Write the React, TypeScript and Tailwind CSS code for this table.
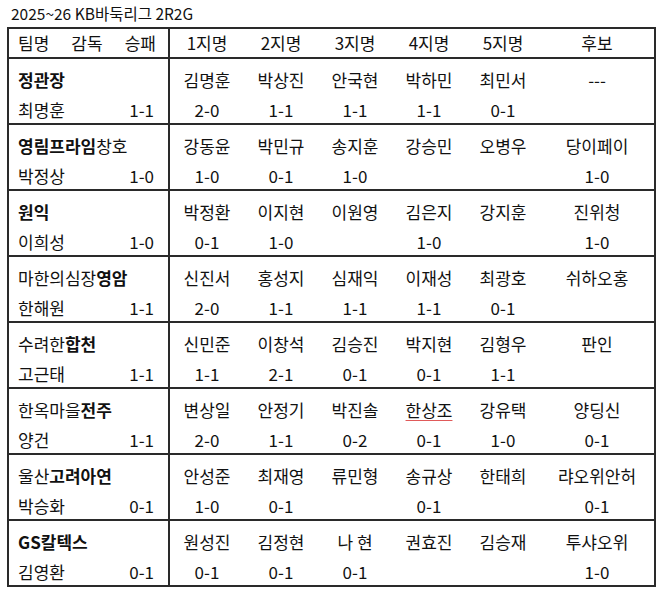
import React from 'react';

type Pick = { name: string; score?: string; mark?: boolean };
type Team = { name: React.ReactNode; coach: string; record: string; picks: Pick[] };

const teams: Team[] = [
  {
    name: <b>정관장</b>,
    coach: '최명훈',
    record: '1-1',
    picks: [
      { name: '김명훈', score: '2-0' },
      { name: '박상진', score: '1-1' },
      { name: '안국현', score: '1-1' },
      { name: '박하민', score: '1-1' },
      { name: '최민서', score: '0-1' },
      { name: '---' },
    ],
  },
  {
    name: (
      <>
        <b>영림프라임</b>창호
      </>
    ),
    coach: '박정상',
    record: '1-0',
    picks: [
      { name: '강동윤', score: '1-0' },
      { name: '박민규', score: '0-1' },
      { name: '송지훈', score: '1-0' },
      { name: '강승민' },
      { name: '오병우' },
      { name: '당이페이', score: '1-0' },
    ],
  },
  {
    name: <b>원익</b>,
    coach: '이희성',
    record: '1-0',
    picks: [
      { name: '박정환', score: '0-1' },
      { name: '이지현', score: '1-0' },
      { name: '이원영' },
      { name: '김은지', score: '1-0' },
      { name: '강지훈' },
      { name: '진위청', score: '1-0' },
    ],
  },
  {
    name: (
      <>
        마한의심장<b>영암</b>
      </>
    ),
    coach: '한해원',
    record: '1-1',
    picks: [
      { name: '신진서', score: '2-0' },
      { name: '홍성지', score: '1-1' },
      { name: '심재익', score: '1-1' },
      { name: '이재성', score: '1-1' },
      { name: '최광호', score: '0-1' },
      { name: '쉬하오홍' },
    ],
  },
  {
    name: (
      <>
        수려한<b>합천</b>
      </>
    ),
    coach: '고근태',
    record: '1-1',
    picks: [
      { name: '신민준', score: '1-1' },
      { name: '이창석', score: '2-1' },
      { name: '김승진', score: '0-1' },
      { name: '박지현', score: '0-1' },
      { name: '김형우', score: '1-1' },
      { name: '판인' },
    ],
  },
  {
    name: (
      <>
        한옥마을<b>전주</b>
      </>
    ),
    coach: '양건',
    record: '1-1',
    picks: [
      { name: '변상일', score: '2-0' },
      { name: '안정기', score: '1-1' },
      { name: '박진솔', score: '0-2' },
      { name: '한상조', score: '0-1', mark: true },
      { name: '강유택', score: '1-0' },
      { name: '양딩신', score: '0-1' },
    ],
  },
  {
    name: (
      <>
        울산<b>고려아연</b>
      </>
    ),
    coach: '박승화',
    record: '0-1',
    picks: [
      { name: '안성준', score: '1-0' },
      { name: '최재영', score: '0-1' },
      { name: '류민형' },
      { name: '송규상', score: '0-1' },
      { name: '한태희' },
      { name: '랴오위안허', score: '0-1' },
    ],
  },
  {
    name: <b>GS칼텍스</b>,
    coach: '김영환',
    record: '0-1',
    picks: [
      { name: '원성진', score: '0-1' },
      { name: '김정현', score: '0-1' },
      { name: '나 현', score: '0-1' },
      { name: '권효진' },
      { name: '김승재' },
      { name: '투샤오위', score: '1-0' },
    ],
  },
];

const headers = ['1지명', '2지명', '3지명', '4지명', '5지명', '후보'];
const pickCols = 'grid grid-cols-[74px_74px_74px_74px_74px_1fr]';

export default function App() {
  return (
    <div
      className="w-[660px] h-[608px] bg-white text-[#111] overflow-hidden"
      style={{ fontFamily: '"Noto Sans CJK KR", "Noto Sans", sans-serif' }}
    >
      {/* Title */}
      <div className="h-[27px] pl-[11px] text-[15.5px] leading-[27px]">2025~26 KB바둑리그 2R2G</div>

      <div className="ml-[7px] w-[649px] border-2 border-[#2a2a2a] text-[17px]">
        {/* Header row */}
        <div className="flex h-[28px] leading-[28px]">
          <div className="w-[161px] shrink-0 border-r-2 border-[#2a2a2a] pl-[9px] pr-[12px] flex justify-between">
            <span>팀명</span>
            <span>감독</span>
            <span>승패</span>
          </div>
          <div className={`flex-1 ${pickCols}`}>
            {headers.map((h) => (
              <div key={h} className="text-center">
                {h}
              </div>
            ))}
          </div>
        </div>

        {teams.map((t, i) => (
          <div key={i} className="flex border-t-2 border-[#2a2a2a] h-[66px] pt-[6px] leading-[30px]">
            <div className="w-[161px] shrink-0 border-r-2 border-[#2a2a2a] -mt-[6px] pt-[6px] pl-[9px] pr-[14px]">
              <div className="whitespace-nowrap">{t.name}</div>
              <div className="flex justify-between">
                <span>{t.coach}</span>
                <span>{t.record}</span>
              </div>
            </div>
            <div className={`flex-1 ${pickCols}`}>
              {t.picks.map((p, j) => (
                <div key={j} className="text-center whitespace-pre">
                  <div>
                    {p.mark ? (
                      <span className="underline decoration-[#e05a5a] decoration-1 underline-offset-[3px]">
                        {p.name}
                      </span>
                    ) : (
                      p.name
                    )}
                  </div>
                  <div>{p.score ?? '\u00a0'}</div>
                </div>
              ))}
            </div>
          </div>
        ))}
      </div>
    </div>
  );
}
